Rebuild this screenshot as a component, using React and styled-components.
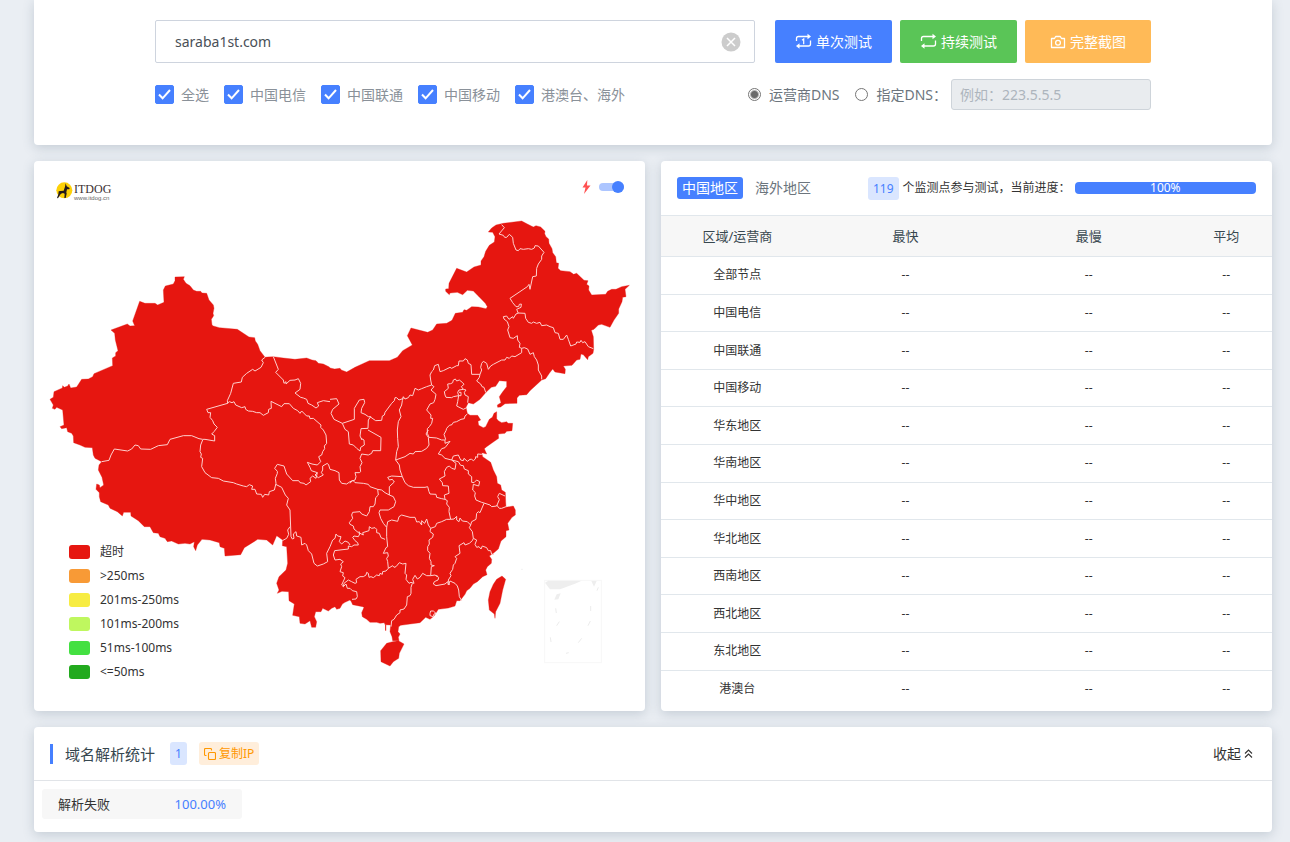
import React from 'react';
import styled, { createGlobalStyle } from 'styled-components';

const GlobalStyle = createGlobalStyle`
  * { box-sizing: border-box; }
  body {
    margin: 0;
    background: #eaeef3;
    color: #333;
    font-family: "Noto Sans", "Noto Sans CJK SC", sans-serif;
    font-size: 14px;
    line-height: 20px;
  }
  button, input { font: inherit; }
`;

const Page = styled.main`
  display: flex;
  flex-direction: column;
  gap: 16px;
  padding: 0 18px 10px 34px;
`;

const Card = styled.section`
  background: #fff;
  border-radius: ${(p) => (p.$flatTop ? '0 0 4px 4px' : '4px')};
  box-shadow: 0 3px 12px rgba(62, 87, 111, 0.22);
  min-width: 0;
`;

/* ---------- search form ---------- */

const SearchForm = styled.form`
  display: flex;
  flex-direction: column;
  gap: 16px;
  max-width: 996px;
  margin: 0 auto;
  padding: 20px 0 35px;
`;

const FormRow = styled.div`
  display: flex;
  align-items: center;
  gap: ${(p) => p.$gap}px;
`;

const HostBox = styled.div`
  flex: 1;
  display: flex;
  align-items: center;
  height: 43px;
  margin-right: 12px;
  padding: 0 13px 0 19px;
  border: 1px solid #ced4de;
  border-radius: 2px;
`;

const HostInput = styled.input`
  flex: 1;
  min-width: 0;
  padding: 0;
  border: 0;
  outline: 0;
  color: #495057;
`;

const ClearButton = styled.button`
  display: flex;
  padding: 0;
  border: 0;
  background: none;
`;

const ActionButton = styled.button`
  display: flex;
  align-items: center;
  justify-content: center;
  gap: 4px;
  height: 43px;
  padding: 0 ${(p) => p.$pad}px;
  border: 0;
  border-radius: 2px;
  background: ${(p) => p.$color};
  color: #fff;
  white-space: nowrap;
`;

const CheckLabel = styled.label`
  display: flex;
  align-items: center;
  gap: 7px;
  color: #8a9199;
  white-space: nowrap;
`;

const CheckInput = styled.input`
  appearance: none;
  width: 19px;
  height: 19px;
  margin: 0;
  border-radius: 2px;
  border: 1px solid #4680ff;
  &:checked {
    background: #4680ff url("data:image/svg+xml,%3Csvg xmlns='http://www.w3.org/2000/svg' viewBox='0 0 17 17'%3E%3Cpath d='M3 8.5l3.6 3.8L14 4' fill='none' stroke='white' stroke-width='2'/%3E%3C/svg%3E");
  }
`;

const DnsGroup = styled.div`
  display: flex;
  align-items: center;
  margin-left: auto;
`;

const RadioLabel = styled.label`
  display: flex;
  align-items: center;
  gap: 8px;
  margin-right: ${(p) => p.$after}px;
  color: #6c757d;
  white-space: nowrap;
`;

const RadioInput = styled.input`
  appearance: none;
  width: 13px;
  height: 13px;
  margin: 0;
  border: 1px solid #767676;
  border-radius: 50%;
  background: #fff;
  &:checked {
    background: radial-gradient(circle, #6b6b6b 0 3px, #fff 5px);
  }
`;

const DnsInput = styled.input`
  width: 200px;
  height: 31px;
  padding: 0 8px;
  border: 1px solid #ced4da;
  border-radius: 3px;
  background: #e9ecef;
  &::placeholder { color: #adb5bd; opacity: 1; }
`;

/* ---------- map ---------- */

const Columns = styled.div`
  display: grid;
  grid-template-columns: 1fr 1fr;
  gap: 16px;
`;

const MapCard = styled(Card)`
  display: grid;
  > * { grid-area: 1 / 1; }
`;

const MapSvg = styled.svg`
  display: block;
  width: 100%;
  height: auto;
`;

const Logo = styled.a`
  display: flex;
  gap: 1px;
  place-self: start;
  margin: 21px 22px;
  text-decoration: none;
`;

const LogoText = styled.span`
  display: flex;
  flex-direction: column;
  color: #3a2f30;
  font: 12px/14px "Liberation Serif", serif;
`;

const LogoSite = styled.span`
  color: #666;
  font: 6px/4px "Liberation Sans", sans-serif;
`;

const SwitchLabel = styled.label`
  display: flex;
  align-items: center;
  gap: 8px;
  place-self: start end;
  margin: 19px 21px;
`;

const SwitchInput = styled.input`
  appearance: none;
  display: flex;
  align-items: center;
  justify-content: flex-end;
  width: 25px;
  height: 8px;
  margin: 0;
  border-radius: 4px;
  background: #acc5ff;
  &::before {
    content: "";
    width: 12px;
    height: 12px;
    border-radius: 50%;
    background: #4680ff;
  }
  &:not(:checked) { justify-content: flex-start; }
`;

const Legend = styled.ul`
  place-self: end start;
  margin: 0 0 27px 35px;
  padding: 0;
  list-style: none;
  font-size: 12px;
  line-height: 24px;
`;

const LegendItem = styled.li`
  display: flex;
  align-items: center;
  gap: 10px;
`;

const Swatch = styled.span`
  width: 21px;
  height: 14px;
  border-radius: 3px;
  background: ${(p) => p.$color};
`;

/* ---------- region table ---------- */

const TableCard = styled(Card)`
  display: flex;
  flex-direction: column;
  padding-bottom: 4px;
`;

const TableHead = styled.header`
  display: flex;
  align-items: center;
  gap: 5px;
  height: 54px;
  padding: 0 16px;
  font-size: 12px;
  white-space: nowrap;
`;

const Tab = styled.button`
  height: 22px;
  margin-right: 2px;
  padding: 0 5px;
  border: 0;
  border-radius: 3px;
  background: ${(p) => (p.$active ? '#4680ff' : 'none')};
  color: ${(p) => (p.$active ? '#fff' : '#6c757d')};
  font-size: 14px;
  line-height: 22px;
`;

const Badge = styled.span`
  padding: 0 5px;
  border-radius: 3px;
  background: #dae6ff;
  color: #4680ff;
  font-size: ${(p) => p.$size}px;
  line-height: 23px;
`;

const ProgressGroup = styled.div`
  flex: 1;
  display: flex;
  align-items: center;
  gap: 4px;
  margin-left: 45px;
`;

const Progress = styled.div`
  flex: 1;
  height: 12px;
  border-radius: 4px;
  background: #4680ff;
  color: #fff;
  text-align: center;
  line-height: 12px;
`;

const TableBody = styled.div`
  flex: 1;
  min-height: 0;
`;

const Table = styled.table`
  width: 100%;
  height: 100%;
  table-layout: fixed;
  border-collapse: collapse;
  font-size: 12px;
  text-align: center;
`;

const HeadCell = styled.th`
  width: ${(p) => p.$width};
  height: 41px;
  padding: 0;
  border: solid #e1e7ec;
  border-width: 1px 0;
  background: #f7f7f7;
  color: #37474f;
  font-size: 13px;
  font-weight: 400;
`;

const Row = styled.tr`
  & + & { border-top: 1px solid #e1e7ec; }
`;

const Cell = styled.td`
  padding: 0;
`;

/* ---------- resolution statistics ---------- */

const StatHead = styled.header`
  display: flex;
  align-items: center;
  height: 54px;
  padding: 0 19px 0 16px;
  border-bottom: 1px solid #e1e4e8;
`;

const Title = styled.h2`
  margin: 0 15px 0 0;
  padding-left: 12px;
  border-left: 3px solid #4680ff;
  color: #37474f;
  font-size: 15px;
  font-weight: 400;
  line-height: 20px;
`;

const CopyButton = styled.button`
  display: flex;
  align-items: center;
  gap: 3px;
  height: 23px;
  margin-left: 12px;
  padding: 0 5px;
  border: 0;
  border-radius: 3px;
  background: #ffeedb;
  color: #ff9800;
  font-size: 12px;
`;

const FoldButton = styled.button`
  display: flex;
  align-items: center;
  gap: 3px;
  margin-left: auto;
  padding: 0;
  border: 0;
  background: none;
  color: #333;
`;

const StatBody = styled.div`
  padding: 8px 8px 13px;
`;

const Stat = styled.div`
  display: flex;
  justify-content: space-between;
  width: 200px;
  padding: 0 16px;
  border-radius: 3px;
  background: #f7f7f7;
  font-size: 13px;
  line-height: 30px;
`;

const StatValue = styled.span`
  color: #4680ff;
`;

/* ---------- icons ---------- */

const LoopIcon = ({ once }) => (
  <svg width="17" height="17" viewBox="0 0 17 17" fill="none" stroke="currentColor" strokeWidth="1.3">
    <path d="M1.500 8V5.500Q1.500 3.500 3.500 3.500H14M15.500 7.500v3.500Q15.500 13 13.500 13H3" />
    <path d="M12.500 .8L16 3.500l-3.500 2.700zM4.500 10.300L1 13l3.500 2.700z" fill="currentColor" stroke="none" />
    {once && <path d="M7 7.200L8.700 6v5.200" strokeWidth="1.200" />}
  </svg>
);

const CameraIcon = () => (
  <svg width="16" height="14" viewBox="0 0 16 14" fill="none" stroke="currentColor" strokeWidth="1.3">
    <path d="M1.500 3.500h3l1.200-2h4.600l1.200 2h3v9h-13z" strokeLinejoin="round" />
    <circle cx="8" cy="7.700" r="2.400" />
  </svg>
);

const ClearIcon = () => (
  <svg width="20" height="20" viewBox="0 0 20 20">
    <circle cx="10" cy="10" r="9.500" fill="#ccc" />
    <path d="M6 6l8 8M14 6l-8 8" stroke="#fff" strokeWidth="1.500" />
  </svg>
);

const BoltIcon = () => (
  <svg width="9" height="14" viewBox="0 0 9 14">
    <path d="M5.300 0L.5 7.500h3L2 14l6.500-8.500H5z" fill="#ff5252" />
  </svg>
);

const CopyIcon = () => (
  <svg width="12" height="12" viewBox="0 0 12 12" fill="none" stroke="currentColor" strokeWidth="1.1">
    <rect x="4.500" y="4.500" width="7" height="7" rx="1" />
    <path d="M2.500 7.500H1.500Q.5 7.500 .5 6.500V1.500Q.5.5 1.500.5H6.500Q7.500.5 7.500 1.500V2.500" />
  </svg>
);

const FoldIcon = () => (
  <svg width="9" height="9" viewBox="0 0 9 9" fill="none" stroke="currentColor" strokeWidth="1.1">
    <path d="M1 4.500L4.500 1 8 4.500M1 8.500L4.500 5 8 8.500" />
  </svg>
);

const DogIcon = () => (
  <svg width="17" height="17" viewBox="0 0 51 51">
    <circle cx="25" cy="25" r="24" fill="#fdd108" />
    <path d="M29 4l3 9 9 5-1 4h-7l-2 9 1 4-3 13h-4l1-13-5-2-6 2-3 4-6 10-3-1 4-11 1-9 5-1 10-1 4-12z" fill="#231a1a" />
  </svg>
);

/* ---------- map geometry: four sheets, each with its own origin ---------- */

const NW = [0, 0];
const NE = [900, 0];
const SW = [0, 810];
const SE = [900, 810];

const shift = ([dx, dy], list) =>
  list.split(' ').map((pair) => {
    const [x, y] = pair.split(',').map(Number);
    return `${x + dx},${y + dy}`;
  }).join(' ');

const mainland = [
  shift(NW, '705,592 712,591 730,590 760,594 795,598 830,594 846,600 858,602 865,610 880,612 898,621'),
  shift(NE, '0,624 14,627 30,625 34,630 50,636 75,622 118,602 178,602 202,592 218,572 247,555 232,527 243,504 293,517 308,510 320,492 350,490 366,481 376,460 398,457 402,449 410,451 425,440 445,441 468,446 472,440 466,430 447,410 430,393 412,391 398,404 382,397 360,399 358,404 347,394 347,387 356,386 357,370 380,325 410,336 432,321 453,315 453,303 462,290 467,274 478,256 493,246 495,230 488,217 475,216 485,204 498,195 520,190 575,183 592,192 610,201 618,197 632,201 645,214 644,221 648,230 656,237 657,250 666,266 668,278 677,290 679,308 686,310 684,325 692,332 720,335 731,343 740,340 762,361 774,362 770,373 777,378 776,390 785,405 827,403 833,394 845,388 858,388 875,380 898,376 885,388 888,410 878,412 876,425 866,447 866,460 852,480 840,502 815,493 805,495 792,508 784,511 790,530 791,568 789,580 775,590 773,599 760,584 753,582 750,598 740,600 726,616 700,618 706,628 705,641 675,636 668,627 658,640 647,656 635,660 600,692 590,704 568,706 561,714 561,730 525,731 512,741 503,742 502,735 513,728 508,710 517,697 530,680 530,664 508,662 497,679 484,682 468,697 450,718 430,732 415,728 408,742 412,760 420,766 443,766 452,780 444,784 446,796 460,803 467,800 478,778 487,772 492,760 500,755 500,776 505,782 515,788 530,785 534,790 548,790 546,812'),
  shift(SE, '530,4 525,10 505,12 506,25 490,36 470,50 463,56 470,72 455,68 458,80 482,97 490,120 500,140 502,160 512,165 515,180 526,187 527,215 528,232 550,228 556,240 556,255 546,262 533,280 537,300 528,302 528,320 513,333 505,357 490,370 478,378 485,388 484,400 472,410 467,420 471,434 458,440 442,455 430,462 420,475 410,482 405,493 390,512 380,512 375,528 355,534 325,538 312,558 300,568 287,562 270,578 240,582 212,586 206,590 204,605 210,612 205,622 207,632 188,632 186,620 180,605 182,585 165,584 163,578 150,580 140,577 120,577 110,568 97,560 95,548 102,532 98,530 68,524 64,515 60,510 45,517 37,522 30,535 20,538 15,530 5,535'),
  shift(SW, '895,543 878,535 873,545 857,545 853,560 860,575 857,592 845,592 840,572 825,582 810,580 808,560 788,556 793,522 777,512 776,485 756,484 742,490 747,480 740,460 747,440 768,420 773,400 770,350 757,347 758,330 740,317 728,345 710,330 683,328 643,353 632,374 585,378 583,355 570,350 568,338 540,330 516,328 502,345 497,362 491,350 493,335 480,342 465,340 445,342 425,333 412,335 405,325 390,320 385,310 370,308 360,290 343,290 325,272 303,258 302,247 281,247 277,258 262,245 240,235 235,225 212,215 208,200 208,188 198,178 200,162 208,165 210,173 221,165 216,142 205,120 207,105 215,95 195,85 190,75 187,53 165,52 150,45 131,38'),
  shift(NW, '130,828 125,820 113,815 110,803 95,806 90,800 102,795 98,750 80,742 75,748 67,745 70,735 60,718 70,712 72,695 97,684 98,677 103,682 113,678 117,672 122,684 140,681 155,658 175,657 188,650 192,641 248,617 247,594 257,588 257,578 264,572 256,540 254,520 243,510 292,492 300,498 314,497 308,483 329,424 345,430 375,430 383,435 402,427 400,390 406,378 430,372 435,362 435,351 463,350 460,358 468,370 480,377 490,390 500,394 512,394 516,399 530,400 537,420 550,435 552,445 549,460 551,467 544,478 546,495 550,498 568,503 622,508 657,531 674,533 676,543 683,553 690,572'),
].join(' ');

const hainan = shift(SE, '170,640 188,635 205,632 222,642 208,670 206,685 190,695 180,708 153,695 152,662');
const taiwan = shift(SE, '516,438 527,448 518,480 510,520 497,545 495,565 493,552 478,540 475,510 480,485 490,463 500,448');

const borders = [
  [NW, '705,592 695,600 700,608 693,622 675,633 668,628 650,640 637,652 634,666 610,670 602,700 592,722 593,730 530,748 534,758 542,758 540,772 548,782 552,792 562,802 552,815 545,822 554,827 554,843 525,838 518,838'],
  [NW, '592,730 598,725 606,728 612,725 617,735 635,743 645,740 647,748 655,753 668,754 680,758 690,758 700,766 715,758 716,748 724,745 723,724 755,740 762,731 778,731 790,745 803,752 810,760 815,753 830,768 838,768 840,776 850,775 873,795 872,802 880,810'],
  [SW, '880,0 888,15 890,40 883,48 884,56 878,65 875,75 866,80 872,95 862,105 846,102 832,97 840,112 844,122 862,128 858,145 848,138 840,145 842,155 828,165 822,160 810,158 806,152 788,152 770,132 762,108 742,103 734,115 742,124 742,130 736,145 738,160 733,180 718,185 716,195 704,193 698,202 694,193 680,192 675,178 665,178 668,168 658,164 650,170 640,168 620,162 610,158 580,153 565,145 545,143 525,128 515,110 518,85 512,82 514,72 510,65 512,45 518,30'],
  [SW, '215,95 237,91 243,75 253,57 293,63 305,57 315,45 325,47 332,57 362,58 385,47 412,44 420,28 460,17 485,17 507,26 518,28'],
  [NW, '730,590 745,628 737,637 760,660 762,670 768,665 768,672 780,661 795,660 805,656 812,670 810,688 795,699 812,712 820,714 830,718 834,730 845,735 858,744 866,738 862,728 880,722 900,725'],
  [NE, '0,718 20,716 27,732 8,748 3,760 12,778 37,790 73,778 73,745 88,720 102,718 104,728 95,745 93,758 105,763 115,770 122,770 115,780 114,805 93,806 90,828 96,840'],
  [NE, '120,770 137,782 155,781 157,768 163,765 165,757 185,730 193,722 195,713 200,713 207,720 218,716 220,710 225,717 235,713 240,705 248,707 255,685 265,690 275,686 290,680 305,675 312,680'],
  [NE, '37,790 45,808 55,815 58,852 70,855 80,865 90,873 92,862 103,855 102,840 93,835'],
  [NE, '114,810 153,832 152,872 128,872 125,880 115,885 95,882'],
  [SE, '95,72 90,85 96,98 90,110 92,125 88,128 75,128 78,140 75,150 60,155 50,162 35,160 28,150 27,128 15,122 0,118'],
  [SW, '900,118 896,105 892,100 878,108 878,120 874,128 880,135 865,143 855,135 862,128'],
  [NE, '220,712 217,722 215,735 208,750 213,770 205,785 202,810 203,835 205,860 200,875 197,900'],
  [SE, '197,90 225,80 240,70 250,72 255,65 275,64 290,55 297,45 295,22 288,12 295,0'],
  [NE, '312,680 303,690 318,703 315,718 311,728 300,732 290,750 303,765 302,775 308,775 305,790 298,800 292,806 292,820 297,832 320,834 335,840 345,840'],
  [NE, '305,675 302,660 300,645 305,635 310,630 314,617 325,613 330,635 340,632 360,622 365,625 380,617 385,617 387,603 400,603 405,596 412,600 415,610 423,614 425,643 450,643 448,652 440,663 452,672 456,680 462,682 467,697'],
  [NE, '450,643 455,630 452,622 455,610 460,604 470,610 475,628 482,618 490,613 515,600 525,600 530,592 538,595 545,588 555,590 575,578 575,565'],
  [NE, '575,565 568,562 570,550 563,540 562,527 550,535 540,533 533,510 537,500 532,485 522,477 520,470 530,468 537,478 548,470 550,475 558,462 565,459 585,460 587,475 595,487 605,490 610,486 620,490 630,487 635,497 650,495 660,500 670,503 675,518 685,520 690,538 700,538 710,525 715,538 722,558 738,552 740,546 750,547 753,541 758,548 765,545 775,560 790,566'],
  [NE, '575,565 583,563 593,567 600,583 610,578 613,590 620,600 625,615 625,630 635,648 635,658'],
  [NE, '515,194 523,203 507,222 520,226 524,232 530,232 538,223 548,232 550,250 558,270 565,272 570,266 580,268 595,266 605,268 613,264 615,257 625,258 642,277 635,288 635,298 625,312 620,325 619,348 608,350 600,388 597,373 592,380 540,415 548,428 558,440 566,440 568,433 574,432 573,442 560,448 565,460'],
  [NE, '345,705 343,695 355,685 353,672 362,671 368,668 370,660 376,657 380,663 388,660 398,668 402,673 394,680 400,688 387,690 383,697 386,707 370,710 365,713 348,712 345,705'],
  [NE, '386,707 383,725 380,738 390,743 400,748 410,743'],
  [NE, '400,688 408,690 403,697 405,705 415,710 413,728M387,697 393,697 393,707 386,707'],
  [NE, '412,762 405,768 403,776 393,778 380,785 370,787 366,794 358,796 350,805 348,812 342,823 347,838 345,840 345,850 360,844 345,863 335,866 325,882 335,885 345,895 365,900'],
  [SE, '365,90 370,78 385,75 392,90 400,92 402,85 412,94 420,88 425,88 430,92 436,87 437,80 443,82 443,72 455,73 460,70'],
  [SE, '365,90 385,95 392,106 400,107 403,117 415,122 415,132 425,140 425,157 432,158 440,150 449,155 446,168 430,163 428,180 436,188 434,198 438,210 455,217 465,220 480,225 485,230 500,228 508,209 503,200 508,190 525,198'],
  [SE, '500,225 508,235 515,235 528,230'],
  [SE, '365,90 378,100 375,118 365,115 358,108 350,112 343,125 345,138 328,147 337,158 338,167 355,168 357,190 343,195 345,208'],
  [SE, '197,90 208,105 210,120 217,140 225,158 235,167 250,172 285,172 293,170 297,185 300,192 318,193 320,202 335,206 345,208'],
  [SE, '217,140 185,138 173,142 178,150 187,148 193,156 178,170 178,195 165,188 155,180 143,178 120,170 115,163 100,160 75,158 68,150 60,160'],
  [SE, '178,195 190,200 197,215 192,230 175,240 150,240 147,248 152,265 160,280 170,292'],
  [SE, '170,292 173,275 185,270 203,274 207,260 215,255 240,262 255,262 260,276 268,275 275,285 275,272 284,280 290,267 295,285 302,295'],
  [SE, '345,208 352,212 350,222 358,232 357,245 362,268 350,268 335,275 320,280 316,290 302,295'],
  [SE, '362,268 372,267 380,259 380,270 387,275 390,264 397,273 412,275 422,285 425,275 438,268 440,250 445,245 450,248 462,220'],
  [SE, '422,285 418,293 427,305 430,325 440,330 435,343 440,352 447,350 453,357 457,348 470,353 475,362 482,362 485,373 492,373'],
  [SE, '430,325 427,332 418,340 405,345 402,338 387,347 390,370 375,380 380,385 375,400 370,405 368,418 360,430 363,437 355,450 358,465'],
  [SE, '302,295 300,305 310,312 308,322 297,330 298,342 293,350 293,362 300,370 298,385 303,395 303,405 313,407 304,410 302,437'],
  [SE, '302,437 315,435 322,440 320,436 326,443 324,450 313,455 310,462 318,467 345,462 353,455 355,465 360,453 375,460 382,468 386,480 388,500 395,512'],
  [SE, '302,437 290,437 278,430 270,442 262,447 255,436 248,448 252,460 243,457 237,460 228,448 230,435 225,430 228,400 218,402 208,398 198,410 192,412 188,407 175,415'],
  [SE, '247,460 243,472 243,490 240,497 232,500 230,525 222,537 210,540 210,548 200,555 192,568 185,572 183,590'],
  [SE, '170,292 170,320 173,350 168,353 160,370 173,368 175,378 170,385 173,395 175,415'],
  [SE, '175,415 168,423 158,425 157,433 150,430 148,437 140,435 130,443 123,440 117,442 115,430 110,427 108,435 100,440 90,440 78,448 80,458 75,460 65,455 55,450 42,460 40,470 48,462 52,475 60,475 67,482 80,485 82,500 78,507 66,508'],
  [SE, '40,470 35,465 45,443 38,438 40,428 30,425 35,410 32,402 40,395 30,388 15,390 10,375 14,362 30,360 55,357 55,348 65,350 72,345 85,345 83,338 75,332 68,322 72,318 85,320 90,310 100,315 98,308 117,302 118,290 125,295 135,293 140,298 140,308 148,310 153,323 165,328'],
  [SE, '143,178 145,195 137,203 135,222 130,230 120,230 118,245 110,258 95,252 90,245 68,247 65,255 68,265 58,278 60,283 70,288 72,297 90,312 87,304'],
  [SE, '0,350 8,330 15,325 18,312 23,318 33,320 28,335 35,342 45,333 55,337 60,345'],
  [SW, '900,350 890,370 893,395 880,402 862,408 852,400 845,372 835,362 830,345 825,340 815,345 813,322 800,318 798,305 790,312 792,325 787,327 783,320 780,240 770,225 775,205 766,195 755,172 737,163'],
  [SW, '780,290 773,300 776,313 770,325 757,332'],
  [SE, '300,550 302,543 310,543 318,550 312,552 310,560 300,557 300,550'],
];

const islets = [
  '645,458 655,452 755,452 735,461 690,478 660,478',
  '784,453 800,453 792,470',
  '680,493 692,490 685,508 673,509',
];

const ChinaMap = () => (
  <MapSvg viewBox="12 3 1833 1650" role="img" aria-label="中国地区">
    <g fill="#e61610" stroke="#e61610" strokeWidth="1" strokeLinejoin="round">
      <polygon points={mainland} />
      <polygon points={hainan} />
      <polygon points={taiwan} />
      <path d="M1067 1395V1412" strokeWidth="3" />
    </g>
    <g fill="none" stroke="#ffd0ce" strokeWidth="3" strokeLinejoin="round">
      {borders.map(([origin, list], i) => (
        <path
          key={i}
          d={list.split('M').map((part) => 'M' + shift(origin, part)).join('')}
        />
      ))}
    </g>
    <g transform="translate(900 810)" fill="#eee">
      <rect x="644" y="451" width="170" height="247" fill="none" stroke="#f7f7f7" strokeWidth="3" />
      {islets.map((points) => <polygon key={points} points={points} />)}
      <path
        d="M805 472l-4 10M782 528v15M677 535l2 14M688 575l-8 12M781 573l-7 14M661 622l2 14M755 625l-10 13M708 670l8-2M574 418h4"
        fill="none" stroke="#ececec" strokeWidth="3"
      />
    </g>
  </MapSvg>
);

/* ---------- data ---------- */

const carriers = ['全选', '中国电信', '中国联通', '中国移动', '港澳台、海外'];

const legend = [
  ['#e61610', '超时'],
  ['#f89a36', '>250ms'],
  ['#f7ec42', '201ms-250ms'],
  ['#bff75f', '101ms-200ms'],
  ['#43e041', '51ms-100ms'],
  ['#22aa1e', '<=50ms'],
];

const headings = [['区域/运营商', '25%'], ['最快', '30%'], ['最慢', '30%'], ['平均', '15%']];

const regions = [
  '全部节点', '中国电信', '中国联通', '中国移动', '华东地区', '华南地区',
  '华中地区', '华北地区', '西南地区', '西北地区', '东北地区', '港澳台',
];

export default function App() {
  return (
    <>
      <GlobalStyle />
      <Page>
        <Card $flatTop>
          <SearchForm onSubmit={(e) => e.preventDefault()}>
            <FormRow $gap={8}>
              <HostBox>
                <HostInput aria-label="域名" defaultValue="saraba1st.com" />
                <ClearButton type="reset" aria-label="清除"><ClearIcon /></ClearButton>
              </HostBox>
              <ActionButton type="button" $color="#4680ff" $pad={20}><LoopIcon once />单次测试</ActionButton>
              <ActionButton type="button" $color="#5ac557" $pad={20}><LoopIcon />持续测试</ActionButton>
              <ActionButton type="button" $color="#ffba57" $pad={25}><CameraIcon />完整截图</ActionButton>
            </FormRow>
            <FormRow $gap={15}>
              {carriers.map((name) => (
                <CheckLabel key={name}>
                  <CheckInput type="checkbox" defaultChecked />
                  {name}
                </CheckLabel>
              ))}
              <DnsGroup>
                <RadioLabel $after={16}>
                  <RadioInput type="radio" name="dns" defaultChecked />
                  运营商DNS
                </RadioLabel>
                <RadioLabel $after={4}>
                  <RadioInput type="radio" name="dns" />
                  指定DNS：
                </RadioLabel>
                <DnsInput aria-label="指定DNS" placeholder="例如：223.5.5.5" disabled />
              </DnsGroup>
            </FormRow>
          </SearchForm>
        </Card>

        <Columns>
          <MapCard>
            <ChinaMap />
            <Logo href="#">
              <DogIcon />
              <LogoText>ITDOG<LogoSite>www.itdog.cn</LogoSite></LogoText>
            </Logo>
            <SwitchLabel>
              <BoltIcon />
              <SwitchInput type="checkbox" role="switch" aria-label="加速" defaultChecked />
            </SwitchLabel>
            <Legend>
              {legend.map(([color, text]) => (
                <LegendItem key={text}><Swatch $color={color} />{text}</LegendItem>
              ))}
            </Legend>
          </MapCard>

          <TableCard>
            <TableHead>
              <Tab type="button" $active>中国地区</Tab>
              <Tab type="button">海外地区</Tab>
              <ProgressGroup>
                <Badge $size={12}>119</Badge>
                个监测点参与测试，当前进度：
                <Progress>100%</Progress>
              </ProgressGroup>
            </TableHead>
            <TableBody>
              <Table>
                <thead>
                  <tr>
                    {headings.map(([text, width]) => (
                      <HeadCell key={text} $width={width}>{text}</HeadCell>
                    ))}
                  </tr>
                </thead>
                <tbody>
                  {regions.map((name) => (
                    <Row key={name}>
                      <Cell>{name}</Cell>
                      <Cell>--</Cell>
                      <Cell>--</Cell>
                      <Cell>--</Cell>
                    </Row>
                  ))}
                </tbody>
              </Table>
            </TableBody>
          </TableCard>
        </Columns>

        <Card>
          <StatHead>
            <Title>域名解析统计</Title>
            <Badge $size={12}>1</Badge>
            <CopyButton type="button"><CopyIcon />复制IP</CopyButton>
            <FoldButton type="button">收起<FoldIcon /></FoldButton>
          </StatHead>
          <StatBody>
            <Stat>
              解析失败
              <StatValue>100.00%</StatValue>
            </Stat>
          </StatBody>
        </Card>
      </Page>
    </>
  );
}
